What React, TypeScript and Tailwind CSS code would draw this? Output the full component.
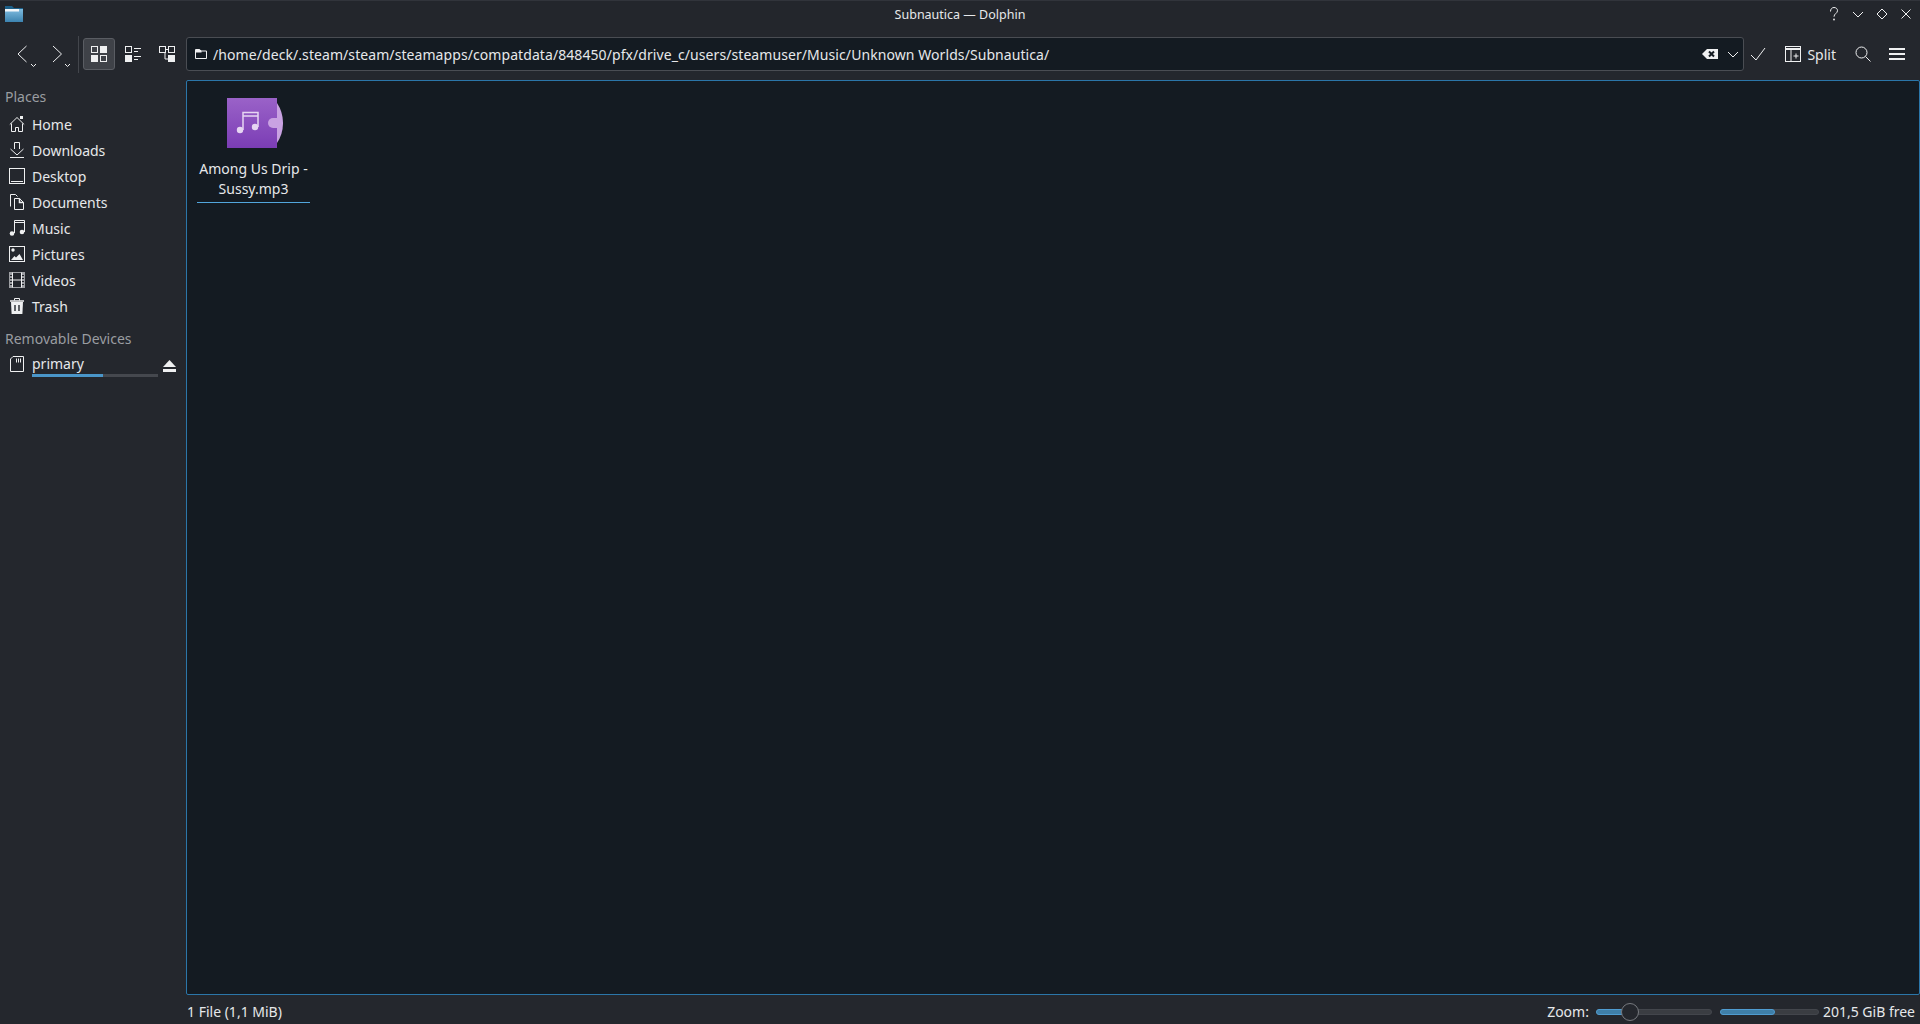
// Dolphin file manager window, Steam Deck dark theme
const ink = '#eff0f1';

const Icon = ({ size = 16, children, className = '' }: { size?: number; children: React.ReactNode; className?: string }) => (
  <svg width={size} height={size} viewBox={`0 0 ${size} ${size}`} fill="none" stroke={ink} strokeWidth="1" className={`shrink-0 ${className}`}>
    {children}
  </svg>
);

const places: [string, React.ReactNode][] = [
  ['Home', <><path d="M.8 8.5 8 1.500l7.200 7" /><path d="M2.500 7.500v8h4v-4h3v4h4v-8" /><rect x="11" y="0" width="3" height="3" fill={ink} stroke="none" /></>],
  ['Downloads', <><path d="M5.500 7V.5h5V7" /><path d="M1.500 7 8 13l6.500-6" /><path d="M1 15.500h14" /></>],
  ['Desktop', <><rect x=".5" y=".5" width="15" height="15" /><path d="M2 13.500h12" /></>],
  ['Documents', <><path d="M1.500 12.500v-12h5l2 2" /><path d="M5.500 15.500v-11h5l4 4v7z" /><path d="M10.500 4.500v4h4" strokeWidth="1.500" /></>],
  ['Music', <><path d="M5.500 13V.5h10V12" /><path d="M5.500 2.500h10" /><circle cx="3" cy="13.500" r="2.300" fill={ink} stroke="none" /><circle cx="13" cy="12" r="2.300" fill={ink} stroke="none" /></>],
  ['Pictures', <><rect x=".5" y=".5" width="15" height="15" /><circle cx="4" cy="4" r="1.700" fill={ink} stroke="none" /><path d="M2 14l3.500-4 1.500 1.500L10.500 8l3.500 6z" fill={ink} stroke="none" /></>],
  ['Videos', <><rect x=".5" y=".5" width="15" height="15" strokeOpacity=".6" /><path d="M3.500 .5v15M12.500 .5v15M3.500 8h9" /><path d="M2 1v14M14 1v14" strokeDasharray="2 1" strokeOpacity=".6" strokeWidth="2" /></>],
  ['Trash', <><path d="M2 4h12l-.6 12H2.600z" fill={ink} stroke="none" /><path d="M1 3h14" strokeWidth="1.500" /><path d="M5.500 2.500V.5h5v2" /><path d="M6 7v6M10 7v6" stroke="#24272d" strokeWidth="1.400" /></>],
];

const Row = ({ label, icon }: { label: string; icon: React.ReactNode }) => (
  <div className="flex h-[26px] items-center gap-[7px] pl-[9px]">
    <Icon>{icon}</Icon>
    <span className="pt-[2px] text-[#e6e8ea]">{label}</span>
  </div>
);

const ToolButton = ({ children }: { children: React.ReactNode }) => (
  <div className="ml-[2px] flex h-[32px] w-[32px] shrink-0 items-center justify-center">{children}</div>
);

const Slider = ({ track, fill, children }: { track: string; fill: string; children?: React.ReactNode }) => (
  <div className={`relative h-[6px] rounded-full border border-[#43464c] bg-[#3a3d42] ${track}`}>
    <div className={`-m-px box-content h-full rounded-full border border-[#4f9cd0] bg-[#3f7fa8] ${fill}`} />
    {children}
  </div>
);

const SmallArrow = ({ className }: { className: string }) => (
  <svg width="7" height="5" viewBox="0 0 7 5" fill="none" stroke={ink} className={`absolute ${className}`}><path d="m1 1 2.500 2.500L6 1" /></svg>
);

export default function App() {
  return (
    <div className="flex h-screen w-full flex-col overflow-hidden bg-[#24272d] text-[14px] leading-[18px] text-[#eff0f1] [font-family:'Noto_Sans',sans-serif]">
      {/* title bar */}
      <header className="relative flex h-[30px] shrink-0 items-center justify-between border-t border-[#31343b] bg-[#23262c] pb-[3px] pl-[5px] pr-[6px]">
        <svg width="18" height="16" viewBox="0 0 18 16" className="shrink-0">
          <defs>
            <linearGradient id="folder" x1="0" y1="0" x2="0" y2="1">
              <stop offset="0" stopColor="#7fbcdf" />
              <stop offset="1" stopColor="#3c83b0" />
            </linearGradient>
          </defs>
          <path d="M0 0h7l2 2h9v14H0z" fill="#1c5f88" />
          <rect y="3" width="18" height="13" fill="url(#folder)" />
          <rect y="3" width="14" height="2.500" fill="#f2f6f9" />
        </svg>
        <span className="absolute inset-x-0 pt-[2px] text-center text-[12.5px] text-[#e6e8ea]">Subnautica — Dolphin</span>
        <div className="flex items-center gap-[8px]">
          <Icon><path d="M4.500 5.500C4.500 3 6 1.500 8 1.500s3.500 1.300 3.500 3.200c0 2.600-3.500 3-3.500 6" /><circle cx="8" cy="13.500" r=".9" fill={ink} stroke="none" /></Icon>
          <Icon><path d="m3 6 5 5 5-5" /></Icon>
          <Icon><path d="m8 3 5 5-5 5-5-5z" /></Icon>
          <Icon><path d="m3.500 3.500 9 9M12.500 3.500l-9 9" /></Icon>
        </div>
      </header>

      {/* tool bar */}
      <div className="flex h-[50px] shrink-0 items-center pb-[4px] pt-[2px]">
        <div className="flex w-[77px] shrink-0 items-center pl-[16px]">
          <div className="relative w-[34px]">
            <svg width="16" height="18" viewBox="0 0 16 18" fill="none" stroke={ink} className="block"><path d="M10.500 1 2 9l8.500 8" /></svg>
            <SmallArrow className="left-[14px] top-[18px]" />
          </div>
          <div className="relative w-[27px]">
            <svg width="16" height="18" viewBox="0 0 16 18" fill="none" stroke={ink} className="block"><path d="m3 1 8.500 8L3 17" /></svg>
            <SmallArrow className="left-[14px] top-[18px]" />
          </div>
        </div>
        <div className="ml-[1px] h-[37px] w-px shrink-0 bg-[#43464c]" />
        <div className="ml-[4px] flex h-[32px] w-[32px] shrink-0 items-center justify-center rounded-[3px] border border-[#5a5d63] bg-[#3f4248]">
          <Icon><rect x=".5" y=".5" width="6" height="6" /><rect x="9" y="0" width="7" height="7" fill={ink} stroke="none" /><rect x="0" y="9" width="7" height="7" fill={ink} stroke="none" /><rect x="9.500" y="9.500" width="6" height="6" /></Icon>
        </div>
        <ToolButton><Icon><rect x=".5" y=".5" width="6" height="6" /><rect x="0" y="9" width="7" height="7" fill={ink} stroke="none" /><path d="M9 2.500h7M9 5.500h4M9 10.500h7M9 13.500h4" /></Icon></ToolButton>
        <ToolButton><Icon><rect x=".5" y=".5" width="6" height="6" /><rect x="9.500" y=".5" width="6" height="6" /><rect x="9" y="9" width="7" height="7" fill={ink} stroke="none" /><path d="M6.500 3.500h3M6 6.500v6.500h3" /></Icon></ToolButton>

        {/* location bar */}
        <div className="ml-[3px] flex h-[34px] min-w-0 flex-1 items-center rounded-[3px] border border-[#4a4d53] bg-[#141b22] pl-[8px] pr-[4px]">
          <Icon size={12}><path d="M.5 10.500v-9h4l1.500 1.500h5.500v7.500z" /><path d="M1 1.500h4l1.500 1.500v1.500H1z" fill={ink} stroke="none" /></Icon>
          <span className="ml-[6px] flex-1 truncate pt-[1px] tracking-[0.076px] text-[#e6e8ea]">/home/deck/.steam/steam/steamapps/compatdata/848450/pfx/drive_c/users/steamuser/Music/Unknown Worlds/Subnautica/</span>
          <Icon className="mr-[9px]"><path d="M0 8 5 3h11v10H5z" fill={ink} stroke="none" /><path d="m7 5.500 5 5M12 5.500l-5 5" stroke="#141b22" strokeWidth="2" /></Icon>
          <svg width="12" height="7" viewBox="0 0 12 7" fill="none" stroke={ink}><path d="m1 1 5 5 5-5" /></svg>
        </div>

        <div className="flex w-[28px] shrink-0 justify-center"><Icon><path d="m1 9 5 5L15 2" /></Icon></div>
        <div className="ml-[13px] flex shrink-0 items-center gap-[6px]">
          <Icon><rect x=".5" y=".5" width="15" height="15" /><path d="M0 3h16" strokeWidth="2" /><path d="M6 3v13M11 7.500v5M8.500 10h5" /></Icon>
          <span className="pt-[1px] text-[#e6e8ea]">Split</span>
        </div>
        <div className="ml-[7px] flex h-[32px] w-[40px] shrink-0 items-center justify-center">
          <Icon><circle cx="6.500" cy="6.500" r="5.500" /><path d="m10.500 10.500 5 5" /></Icon>
        </div>
        <div className="mr-[9px] flex h-[32px] w-[28px] shrink-0 items-center justify-center">
          <Icon><path d="M0 3h16M0 8h16M0 13h16" strokeWidth="2" /></Icon>
        </div>
      </div>

      {/* sidebar and view */}
      <div className="flex min-h-0 flex-1">
        <aside className="w-[186px] shrink-0 pt-[8px]">
          <div className="pl-[5px] text-[#9a9da1]">Places</div>
          <div className="mt-[5px]">
            {places.map(([label, icon]) => <Row key={label} label={label} icon={icon} />)}
          </div>
          <div className="mt-[11px] pl-[5px] text-[#9a9da1]">Removable Devices</div>
          <div className="mt-[3px] flex h-[26px] items-center pl-[9px]">
            <Icon className="mr-[7px]"><path d="M4 .5h10.500v15h-13V3z" /><path d="M7.500 2.500v4M9.500 2.500v4M11.500 2.500v4" /></Icon>
            <div className="w-[126px]">
              <div className="pt-[2px] leading-[20px] text-[#e6e8ea]">primary</div>
              <div className="h-[3px] bg-[#45484e]"><div className="h-full w-[56%] bg-[#4a96c9]" /></div>
            </div>
            <svg width="13" height="12" viewBox="0 0 13 12" fill={ink} className="ml-[5px] mt-[3px]"><path d="M6.500 0 13 7H0z" /><rect y="9" width="13" height="3" /></svg>
          </div>
        </aside>

        <main className="flex min-w-0 flex-1 flex-col">
          <div className="min-h-0 flex-1 rounded-[2px] border border-[#2b76a9] bg-[#141b22] pl-[10px] pt-[17px]">
            <div className="flex w-[113px] flex-col items-center">
              <svg width="56" height="50" viewBox="0 0 56 50" className="ml-[2px] shrink-0">
                <defs>
                  <linearGradient id="sleeve" x1="0" y1="0" x2="0" y2="1">
                    <stop offset="0" stopColor="#9a62c8" />
                    <stop offset="1" stopColor="#7b3db5" />
                  </linearGradient>
                </defs>
                <path d="M50 5A36.300 36.300 0 0 1 50 45z" fill="#c9a2e2" />
                <rect width="50" height="50" fill="url(#sleeve)" />
                <circle cx="46" cy="25" r="5" fill="#c9a2e2" />
                <rect x="46" y="20" width="4" height="10" fill="#c9a2e2" />
                <path d="M16 32V14.500h15V29M16 18h15" fill="none" stroke="#e6d5f2" strokeWidth="1.500" />
                <circle cx="13" cy="32" r="3.200" fill="#e6d5f2" />
                <circle cx="28" cy="29" r="3.200" fill="#e6d5f2" />
              </svg>
              <div className="mt-[11px] w-full border-b border-[#52a6dc] pb-[3px] text-center leading-[20px] text-[#e6e8ea]">
                Among Us Drip -<br />Sussy.mp3
              </div>
            </div>
          </div>

          {/* status bar */}
          <footer className="flex h-[29px] shrink-0 items-center pl-[1px] pr-[5px] pt-[4px]">
            <span className="flex-1 text-[#e6e8ea]">1 File (1,1 MiB)</span>
            <span className="text-[#e6e8ea]">Zoom:</span>
            <Slider track="ml-[7px] w-[116px]" fill="w-[28%]">
              <div className="absolute left-[24px] top-[-7px] h-[18px] w-[18px] rounded-full border border-[#777a7f] bg-[#24272d]" />
            </Slider>
            <Slider track="ml-[8px] w-[99px]" fill="w-[55%]" />
            <span className="ml-[4px] text-[#e6e8ea]">201,5 GiB free</span>
          </footer>
        </main>
      </div>
    </div>
  );
}
